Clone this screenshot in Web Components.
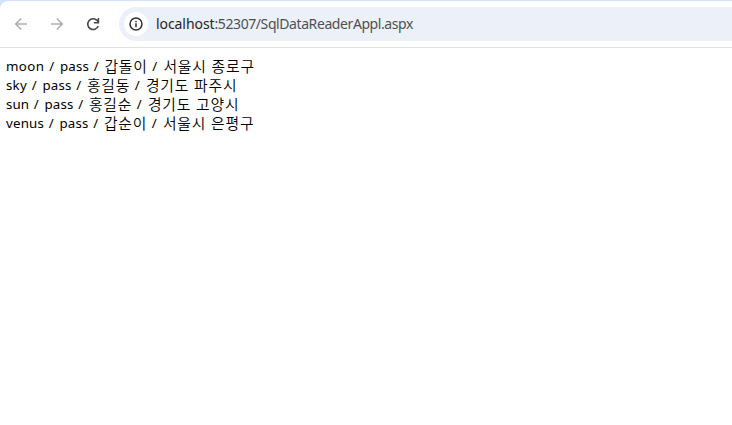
<!DOCTYPE html>
<html lang="ko"><head><meta charset="utf-8"><title>SqlDataReaderAppl</title>
<style>body{margin:0;background:#fff;overflow:hidden}</style></head><body>
<browser-window></browser-window>
<script>
// A run of text whose letter spacing is tuned to fill the advance given in "w".
customElements.define('text-run', class extends HTMLElement{
  connectedCallback(){
    const r=this.attachShadow({mode:'open'});
    r.innerHTML='<style>:host{display:inline-block;white-space:pre;flex:none}</style><span><slot></slot></span>';
    const w=+this.getAttribute('w'), s=r.querySelector('span');
    const n=[...this.textContent].length;
    this.style.letterSpacing=((w-s.getBoundingClientRect().width)/n)+'px';
    this.style.width=w+'px';
  }
});
customElements.define('tool-bar', class extends HTMLElement{
  connectedCallback(){
    this.attachShadow({mode:'open'}).innerHTML=`<style>
    :host{display:block;background:#d3e3fd;padding-top:1px}
    .bar{display:flex;align-items:center;height:46px;background:#fff;border-bottom:1px solid #dfe0e2;border-top-left-radius:8px;padding-left:13px}
    svg{display:block;flex:none}
    .nav{margin-right:20px}
    .reload{margin-right:18px}
    .box{display:flex;align-items:center;flex:1;height:34px;background:#ebf0f9;border-radius:17px 0 0 17px;padding-left:5px}
    .info{display:grid;place-items:center;width:24px;height:24px;border-radius:50%;background:#fff;margin-right:8px}
    .url{display:flex;font:14px/20px "Noto Sans","Open Sans",sans-serif;color:#505050}
    .host{color:#252525}
    </style><div class="bar">
    <svg class="nav" width="16" height="16" viewBox="0 0 16 16" fill="none" stroke="#b0b0b0" stroke-width="1.6"><path d="M14 8H3M8.2 2.5 2.7 8l5.5 5.5"/></svg>
    <svg class="nav" width="16" height="16" viewBox="0 0 16 16" fill="none" stroke="#b0b0b0" stroke-width="1.6"><path d="M2 8h11M7.8 2.5 13.3 8l-5.5 5.5"/></svg>
    <svg class="reload" width="16" height="16" viewBox="0 0 16 16" fill="none" stroke="#474747" stroke-width="1.6"><path d="M13.2 10A5.4 5.4 0 1 1 12.2 4.5L13.2 5.8M13.4 2v4.7H8.9"/></svg>
    <div class="box"><span class="info"><svg width="16" height="16" viewBox="0 0 16 16" fill="none" stroke="#303030" stroke-width="1.5"><circle cx="8" cy="8" r="6"/><path d="M8 7.2v4M8 4.7v1.5"/></svg></span>
    <span class="url"><text-run class="host" w="58.5">localhost</text-run><text-run w="198.5">:52307/SqlDataReaderAppl.aspx</text-run></span></div></div>`;
  }
});
customElements.define('record-row', class extends HTMLElement{
  connectedCallback(){
    const v=this.getAttribute('fields').split('|').map(x=>x.split(','));
    this.attachShadow({mode:'open'}).innerHTML=`<style>:host{display:flex;height:19px;line-height:19px}
    .ko{font-family:"Noto Sans CJK KR DemiLight","Noto Sans CJK KR",sans-serif;font-size:14.8px;font-weight:350;line-height:17px}
    </style>`+
      v.map(([t,w])=>`<text-run class="${/[가-힣]/.test(t)?'ko':''}" w="${w}">${t}</text-run>`).join('');
  }
});
customElements.define('browser-window', class extends HTMLElement{
  connectedCallback(){
    this.attachShadow({mode:'open'}).innerHTML=`<style>
    :host{display:block;height:425px;background:#fff}
    main{padding:9px 6px;font:13.3px "Noto Sans","Open Sans",sans-serif;color:#000}
    </style><tool-bar></tool-bar><main>
    <record-row fields="moon,38.5|&#32;/ ,15.5|pass,29|&#32;/ ,15.5|갑돌이,43|&#32;/ ,16|서울시,43|&#32;,5|종로구,43.5"></record-row>
    <record-row fields="sky,21|&#32;/ ,15.5|pass,29|&#32;/ ,15.5|홍길동,43|&#32;/ ,16|경기도,43|&#32;,5|파주시,43.5"></record-row>
    <record-row fields="sun,23|&#32;/ ,15.5|pass,29|&#32;/ ,15.5|홍길순,43|&#32;/ ,16|경기도,43|&#32;,5|고양시,43.5"></record-row>
    <record-row fields="venus,38|&#32;/ ,15.5|pass,29|&#32;/ ,15.5|갑순이,43|&#32;/ ,16|서울시,43|&#32;,5|은평구,43.5"></record-row>
    </main>`;
  }
});
</script></body></html>
